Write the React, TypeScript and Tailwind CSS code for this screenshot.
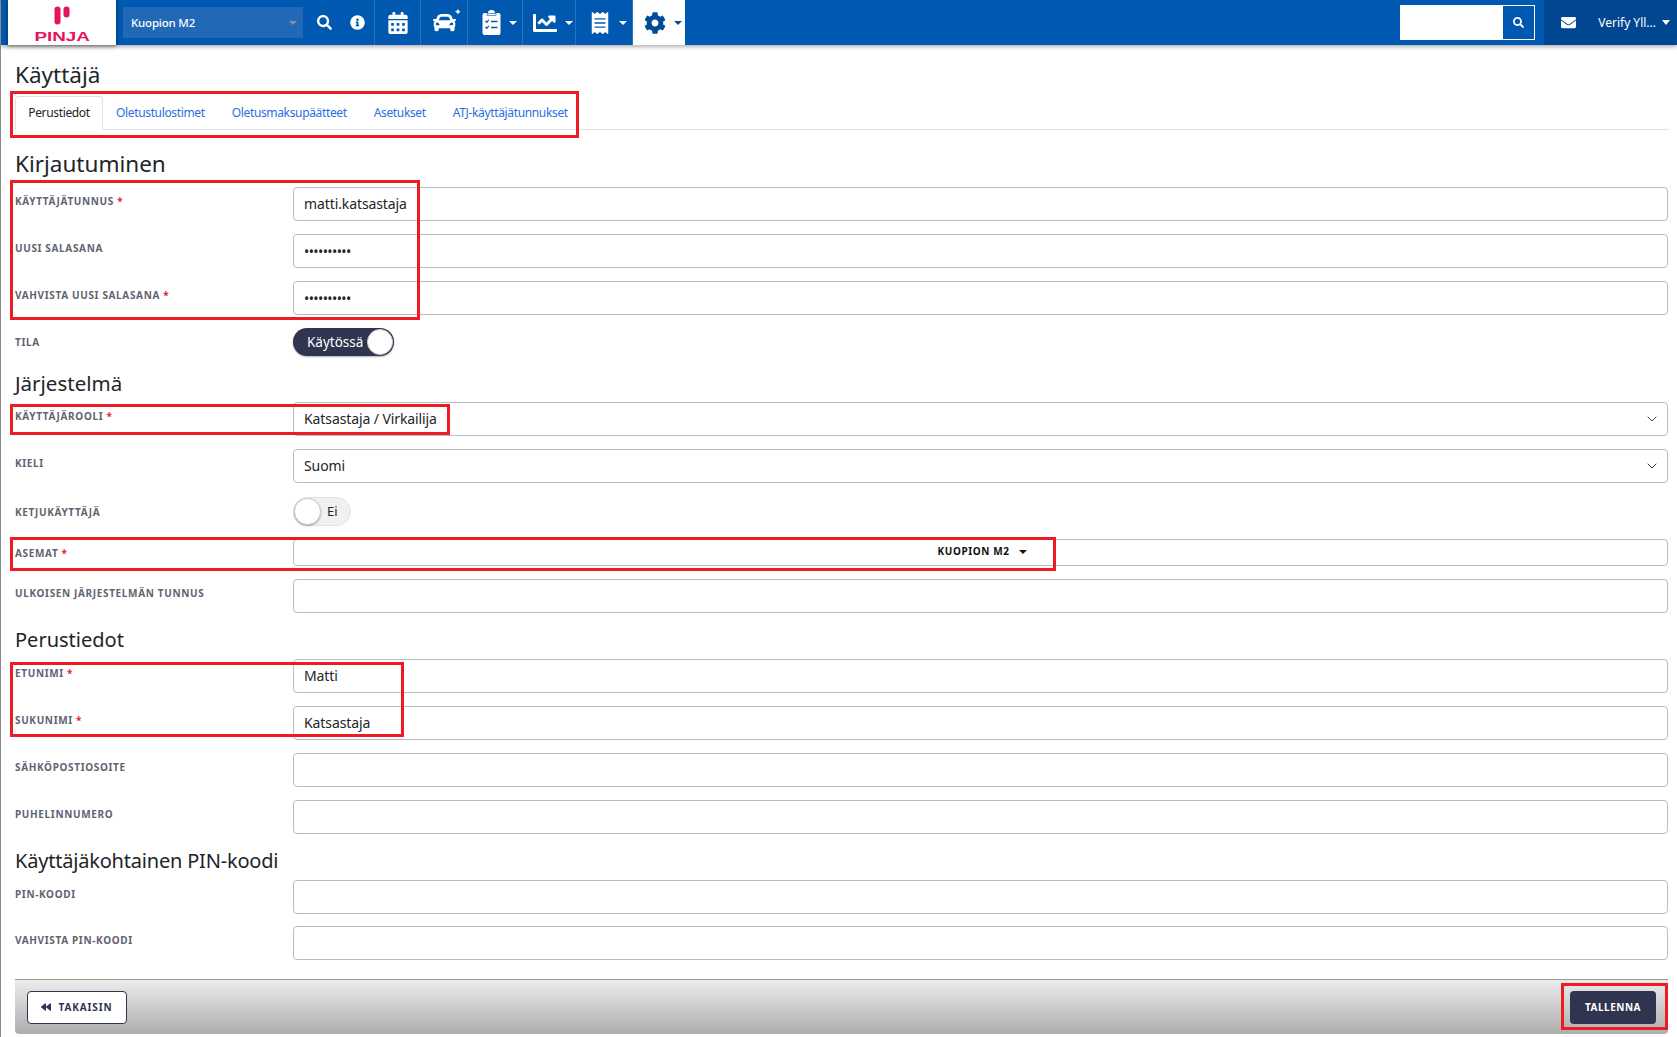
import { ReactNode } from "react";
import { ChevronDown } from "lucide-react";
import { FaBackward, FaCalendarAlt, FaCar, FaChartLine, FaCog, FaEnvelope, FaInfoCircle, FaReceipt, FaSearch } from "react-icons/fa";

const Caret = ({ className = "" }: { className?: string }) => (
  <span className={`inline-block border-x-[4px] border-t-[4px] border-x-transparent border-t-current ${className}`} />
);

const ClipboardIcon = () => (
  <svg width="19" height="25" viewBox="0 0 19 25">
    <rect x="0.5" y="3" width="18" height="22" rx="2" fill="#fff" />
    <path d="M6 4V3a3.5 3 0 0 1 7 0v1z" fill="#fff" />
    <rect x="5" y="3.5" width="9" height="2" fill="#fff" stroke="#0058b0" strokeWidth="0.6" />
    <path d="M3.5 11l1.3 1.3 2-2.4M3.5 17l1.3 1.3 2-2.4" fill="none" stroke="#0058b0" strokeWidth="1.3" />
    <path d="M9 11.5h6.5M9 17.5h6.5" stroke="#0058b0" strokeWidth="1.5" />
  </svg>
);

const NavItem = ({ children, caret, active, width }: { children: ReactNode; caret?: boolean; active?: boolean; width: string }) => (
  <div className={`flex h-full items-center justify-center gap-[8px] border-l border-[#2b72bc] ${caret ? "pl-[8px]" : ""} ${width} ${active ? "bg-white text-[#004b96]" : "text-white"}`}>
    {children}
    {caret && <Caret className="border-x-[3px] border-t-[3px]" />}
  </div>
);

const Navbar = () => (
  <div className="relative z-10 flex h-[45px] items-center bg-[#0058b0] pl-[7px] shadow-[0_2px_4px_rgba(0,0,0,0.3)]">
    <div className="flex h-[45px] w-[108px] flex-col items-center self-start bg-white shadow-[0_1px_4px_rgba(0,0,0,0.5)]">
      <svg width="16" height="19" viewBox="0 0 16 19" className="mt-[6px]">
        <rect x="0.5" y="0.5" width="6" height="18" rx="3" fill="#e6135f" />
        <rect x="9.5" y="0.5" width="6" height="11" rx="3" fill="#e6135f" />
      </svg>
      <span className="mt-[5px] scale-x-[1.45] text-[13px] font-bold leading-[13px] text-[#e6135f] font-['Liberation_Sans',sans-serif]">PINJA</span>
    </div>
    <div className="ml-[7px] flex h-[31px] w-[180px] items-center justify-between bg-[#2168b6] pl-[8px] pr-[6px] text-[11.5px] font-medium tracking-[-0.2px] text-white">
      Kuopion M2
      <Caret className="text-[#8a8f8f]" />
    </div>
    <div className="flex w-[29px] justify-end text-white"><FaSearch size={15} /></div>
    <div className="flex w-[33px] justify-end text-white"><FaInfoCircle size={15} /></div>
    <div className="ml-[9px] flex h-full">
      <NavItem width="w-[46px]"><FaCalendarAlt size={22} /></NavItem>
      <NavItem width="w-[47px]">
        <span className="relative">
          <FaCar size={23} />
          <span className="absolute -right-[6px] -top-[4px] text-[9px] leading-none">✦</span>
        </span>
      </NavItem>
      <NavItem width="w-[55px]" caret><ClipboardIcon /></NavItem>
      <NavItem width="w-[53px]" caret><FaChartLine size={24} /></NavItem>
      <NavItem width="w-[57px]" caret><FaReceipt size={22} /></NavItem>
      <NavItem width="w-[53px]" caret active><FaCog size={22} /></NavItem>
    </div>
    <div className="ml-auto flex h-full items-center">
      <div className="flex h-[35px] w-[135px] bg-white">
        <div className="flex-1" />
        <div className="flex w-[33px] items-center justify-center border border-white bg-[#0058b0] text-white"><FaSearch size={11} /></div>
      </div>
      <div className="ml-[9px] flex h-full w-[133px] items-center justify-between bg-[#004690] pl-[17px] pr-[7px] text-[12px] text-white">
        <FaEnvelope size={15} />
        <span className="flex items-center gap-[6px]">Verify Yll...<Caret className="border-x-[4px] border-t-[5px]" /></span>
      </div>
    </div>
  </div>
);

const Tabs = () => (
  <div className="-mr-px mt-[3px] flex h-[34px] border-b border-[#dee2e6] text-[12px] tracking-[-0.35px]">
    <div className="flex h-[34px] w-[88px] items-center justify-center rounded-t border border-b-white border-[#dee2e6] bg-white text-[#212529]">Perustiedot</div>
    <div className="flex h-[33px] items-center gap-[27px] pl-[13px] text-[#2a6fe0]">
      <span>Oletustulostimet</span>
      <span>Oletusmaksupäätteet</span>
      <span>Asetukset</span>
      <span>ATJ-käyttäjätunnukset</span>
    </div>
  </div>
);

const Heading = ({ children, className }: { children: ReactNode; className: string }) => (
  <h2 className={`flex h-[34px] items-center text-[#212529] ${className}`}>{children}</h2>
);

const Field = ({ label, required, children, className, center }: { label: string; required?: boolean; children?: ReactNode; className: string; center?: boolean }) => (
  <div className={`flex ${center ? "items-center" : ""} ${className}`}>
    <label className={`w-[278px] shrink-0 text-[10px] font-bold uppercase leading-[14px] tracking-[0.65px] text-[#5f6470] ${center ? "" : "pt-[7px]"}`}>
      {label}
      {required && <span className="text-[#e8202e]"> *</span>}
    </label>
    {children}
  </div>
);

const Input = ({ children, select, h = "h-[34px]" }: { children?: ReactNode; select?: boolean; h?: string }) => (
  <div className={`flex flex-1 items-center justify-between rounded border border-[#bdbdbd] bg-white pb-[2px] pl-[10px] pr-[7px] text-[14px] tracking-[-0.1px] text-[#212529] ${h}`}>
    {children}
    {select && <ChevronDown size={16} strokeWidth={1.5} className="ml-auto mt-[2px] text-[#444]" />}
  </div>
);

const Dots = () => <span className="pt-[4px] text-[14px] leading-none tracking-[-0.6px]">••••••••••</span>;

const redBox = "pointer-events-none absolute z-20 border-[3px] border-[#ed1c24]";

export default function App() {
  return (
    <div className="relative h-[1037px] w-full overflow-hidden border-l border-[#8a8a8a] bg-white font-['Noto_Sans',sans-serif]">
      <Navbar />
      <div className="pl-[14px] pr-[9px]">
        <h1 className="mt-[12px] flex h-[36px] items-center text-[22.5px] text-[#212529]">Käyttäjä</h1>
        <Tabs />

        <Heading className="mb-[6px] mt-[17px] text-[22.5px]">Kirjautuminen</Heading>
        <Field label="Käyttäjätunnus" required className="mb-[13px]"><Input>matti.katsastaja</Input></Field>
        <Field label="Uusi salasana" className="mb-[13px]"><Input><Dots /></Input></Field>
        <Field label="Vahvista uusi salasana" required className="mb-[13px]"><Input><Dots /></Input></Field>
        <Field label="Tila" center className="">
          <div className="flex h-[28px] w-[101px] items-center justify-between rounded-full bg-[#2f3450] pl-[14px] pr-px text-[13.5px] text-white shadow-[0_1px_2px_rgba(0,0,0,0.3)]">
            Käytössä
            <span className="h-[26px] w-[26px] rounded-full border border-[#ccc] bg-white" />
          </div>
        </Field>

        <Heading className="mb-[2px] mt-[10px] text-[20.5px]">Järjestelmä</Heading>
        <Field label="Käyttäjärooli" required className="mb-[13px]"><Input select>Katsastaja / Virkailija</Input></Field>
        <Field label="Kieli" className="mb-[14px]"><Input select>Suomi</Input></Field>
        <Field label="Ketjukäyttäjä" center className="mb-[13px]">
          <div className="flex h-[29px] w-[58px] items-center rounded-full border border-[#e2e2e2] bg-[#f1f1f1] text-[13px] text-[#212529]">
            <span className="h-[27px] w-[27px] rounded-full border border-[#ccc] bg-white shadow-[0_1px_2px_rgba(0,0,0,0.3)]" />
            <span className="ml-[6px]">Ei</span>
          </div>
        </Field>
        <Field label="Asemat" required center className="mb-[13px]">
          <Input h="h-[27px]">
            <span className="flex w-full items-center justify-center gap-[9px] text-[10px] font-bold tracking-[0.6px] text-[#111]">
              KUOPION M2 <Caret className="border-x-[3px] border-t-[3px]" />
            </span>
          </Input>
        </Field>
        <Field label="Ulkoisen järjestelmän tunnus" className="mb-[10px]"><Input /></Field>

        <Heading className="mb-[2px] text-[20px]">Perustiedot</Heading>
        <Field label="Etunimi" required className="mb-[13px]"><Input>Matti</Input></Field>
        <Field label="Sukunimi" required className="mb-[13px]"><Input>Katsastaja</Input></Field>
        <Field label="Sähköpostiosoite" className="mb-[13px]"><Input /></Field>
        <Field label="Puhelinnumero" className="mb-[10px]"><Input /></Field>

        <Heading className="mb-[2px] text-[20px] tracking-[-0.2px]">Käyttäjäkohtainen PIN-koodi</Heading>
        <Field label="PIN-koodi" className="mb-[12px]"><Input /></Field>
        <Field label="Vahvista PIN-koodi" className="mb-[19px]"><Input /></Field>

        <div className="flex h-[55px] items-center justify-between rounded-b border-t border-[#9a9a9a] bg-gradient-to-b from-[#ececec] to-[#aeaeae] px-[12px]">
          <button className="flex h-[33px] w-[100px] items-center justify-center gap-[7px] rounded border border-[#2f3450] bg-white text-[10px] font-bold tracking-[0.9px] text-[#2f3450]">
            <FaBackward size={10} /> TAKAISIN
          </button>
          <button className="h-[33px] w-[86px] rounded bg-[#2f3450] text-[10px] font-bold tracking-[0.5px] text-white">TALLENNA</button>
        </div>
      </div>

      {/* the red marks drawn on top of the screenshot */}
      <div className={`${redBox} left-[9px] top-[91px] h-[47px] w-[569px]`} />
      <div className={`${redBox} left-[9px] top-[180px] h-[140px] w-[410px]`} />
      <div className={`${redBox} left-[9px] top-[404px] h-[31px] w-[440px]`} />
      <div className={`${redBox} left-[9px] top-[537px] h-[34px] w-[1046px]`} />
      <div className={`${redBox} left-[9px] top-[662px] h-[75px] w-[394px]`} />
      <div className={`${redBox} left-[1560px] top-[983px] h-[47px] w-[107px]`} />
    </div>
  );
}
